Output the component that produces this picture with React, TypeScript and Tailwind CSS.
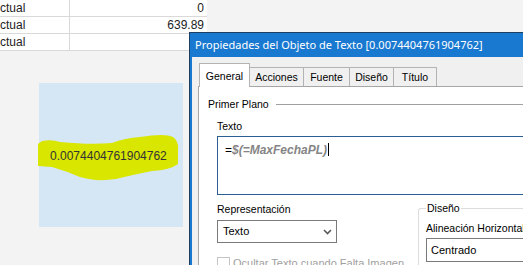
import React from "react";

const rows = [
  { label: "ctual", value: "0" },
  { label: "ctual", value: "639.89" },
  { label: "ctual", value: "" },
];

const tabs = ["Acciones", "Fuente", "Diseño", "Título"];
const tabWidths = ["w-[54px]", "w-[46px]", "w-[44px]", "w-[43px]"];

function Chevron() {
  return (
    <svg width="9" height="6" viewBox="0 0 9 6" className="shrink-0">
      <path d="M1 1 L4.5 4.5 L8 1" fill="none" stroke="#5a5a5a" strokeWidth="1.6" />
    </svg>
  );
}

function Sheet() {
  return (
    <div className="w-[207px] bg-white text-[12px] text-[#222]">
      {rows.map((r, i) => (
        <div key={i} className="flex h-[17px] border-b border-[#d9d9d9]">
          <div className="flex w-[70px] items-center border-r border-[#d9d9d9] leading-none">{r.label}</div>
          <div className="flex flex-1 items-center justify-end pr-[3px] leading-none">{r.value}</div>
        </div>
      ))}
    </div>
  );
}

function TextObject() {
  return (
    <div className="relative ml-[39px] mt-[32px] flex h-[144px] w-[144px] items-center bg-[#d5e6f5]">
      <svg className="absolute left-[-1px] top-[50px] overflow-visible" width="145" height="50" viewBox="38 133 145 50">
        <path
          d="M38 144 L42 141 Q52 139 60 142 Q90 145 112 143 Q125 138 140 137 Q165 133 173 137 Q179 141 178 150 L178 164 Q170 170 152 171 Q132 175 116 179 Q96 182 80 177 Q66 171 52 167 L38 166 Z"
          fill="#d8e600"
        />
      </svg>
      <span className="relative ml-[11px] mt-px text-[12px] text-[#333]">0.0074404761904762</span>
    </div>
  );
}

function Dialog() {
  return (
    <div className="absolute left-[189px] top-[32px] right-0 bottom-0 flex flex-col border-l border-t border-[#1f3f60] bg-[#1979d1]">
      <div className="flex h-[24px] shrink-0 items-center pl-[5px] font-['Noto_Sans',sans-serif] text-[11px] whitespace-nowrap text-white">
        Propiedades del Objeto de Texto [0.0074404761904762]
      </div>
      <div className="ml-[2px] flex-1 bg-[#f0f0f0] pl-[6px] pt-[6px] text-[10.5px] text-black">
        <div className="flex h-[23px] items-end pl-px">
          <div className="relative z-10 -mb-px flex h-[24px] w-[51px] items-center justify-center border-x border-t border-[#b3b3b3] bg-white pt-[2px]">
            General
          </div>
          {tabs.map((t, i) => (
            <div
              key={t}
              className={`flex h-[19px] ${tabWidths[i]} items-center justify-center border-r border-t border-[#b3b3b3] bg-[#f0f0f0] pt-px`}
            >
              {t}
            </div>
          ))}
        </div>
        <div className="h-full border-l border-t border-[#a6a6a6] bg-white">
          <div className="flex items-center pl-[9px] pt-[11px]">
            <span className="h-[13px] leading-[13px]">Primer Plano</span>
            <div className="ml-[7px] h-px flex-1 bg-[#a0a0a0]" />
          </div>
          <div className="pl-[18px]">
            <div className="mt-[9px] h-[13px] leading-[13px]">Texto</div>
            <div className="mt-[3px] h-[59px] w-[330px] border border-[#2b5f94] bg-white pl-[7px] pt-[4px] text-[12px] leading-[14px]">
              <span>=</span>
              <span className="font-bold italic text-[#858585]">$(=MaxFechaPL)</span>
              <span className="ml-px inline-block h-[13px] w-px translate-y-[2px] bg-black" />
            </div>
            <div className="flex">
              <div className="w-[201px] shrink-0">
                <div className="mt-[8px] h-[13px] leading-[13px]">Representación</div>
                <div className="mt-[4px] flex h-[23px] w-[120px] items-center justify-between border border-[#7a7a7a] bg-white pl-[5px] pr-[4px] text-[11px]">
                  <span>Texto</span>
                  <Chevron />
                </div>
                <div className="mt-[12px] flex items-center text-[#a0a0a0]">
                  <div className="h-[13px] w-[13px] border border-[#c4c4c4] bg-white" />
                  <span className="ml-[3px] text-[11px]">Ocultar Texto cuando Falta Imagen</span>
                </div>
              </div>
              <fieldset className="mt-[7px] h-[80px] flex-1 rounded-tl-[3px] border-l border-t border-[#dcdcdc] pl-[7px]">
                <legend className="px-px text-[10.5px] leading-[13px]">Diseño</legend>
                <div className="mt-[7px] h-[13px] leading-[13px] whitespace-nowrap">Alineación Horizontal</div>
                <div className="mt-[3px] flex h-[24px] w-[150px] items-center border border-[#7a7a7a] bg-white pl-[4px] text-[11px]">
                  Centrado
                </div>
              </fieldset>
            </div>
          </div>
        </div>
      </div>
    </div>
  );
}

export default function App() {
  return (
    <div className="relative h-[265px] w-[523px] overflow-hidden bg-[#f3f3f3] font-['Liberation_Sans',Arial,sans-serif]">
      <Sheet />
      <TextObject />
      <Dialog />
    </div>
  );
}
